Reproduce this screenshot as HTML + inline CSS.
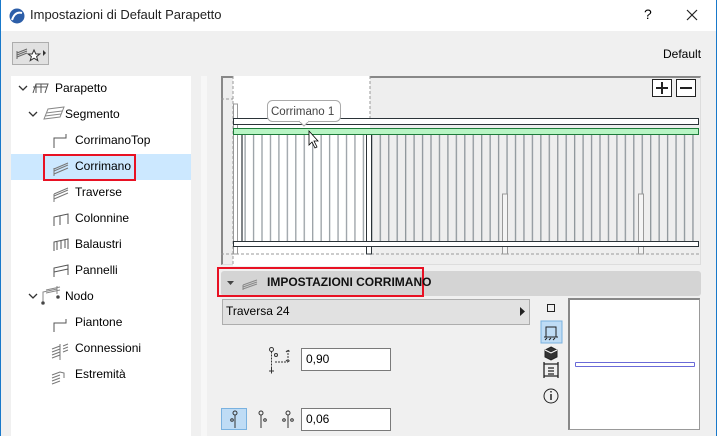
<!DOCTYPE html><html><head><meta charset="utf-8"><style>
*{margin:0;padding:0;box-sizing:border-box}
body{width:717px;height:436px;overflow:hidden;background:#f0f0f0;font-family:"Segoe UI","Liberation Sans",sans-serif;font-size:12px;color:#000;position:relative}
.a{position:absolute}
.t{position:absolute;font-size:12px;white-space:nowrap}
</style></head><body>
<div class="a" style="left:0;top:0;width:717px;height:436px;border-left:1px solid #1979ca;border-right:1px solid #1979ca"></div>
<div class="a" style="left:1px;top:0;width:715px;height:31px;background:#fff"></div>
<svg class="a" style="left:9px;top:8px" width="16" height="16"><circle cx="8" cy="8" r="7.5" fill="#2c5ea8"/><path d="M3 12 Q6 3 13 5" stroke="#fff" stroke-width="2" fill="none"/></svg>
<div class="t" style="left:30px;top:7px;font-size:13px;color:#222">Impostazioni di Default Parapetto</div>
<div class="t" style="left:644px;top:6px;font-size:14px">?</div>
<svg class="a" style="left:686px;top:9px" width="12" height="12"><path d="M1 1L11 11M11 1L1 11" stroke="#222" stroke-width="1.2"/></svg>
<div class="a" style="left:12px;top:42px;width:37px;height:23px;background:#e1e1e1;border:1px solid #adadad"></div>
<svg class="a" style="left:15px;top:45px" width="32" height="18"><path d="M2 8L12 4M2 10L12 6M2 12L12 8M2 6V14" stroke="#666" fill="none"/><path d="M19 5l1.8 4h4l-3.2 2.6 1.2 4-3.8-2.4-3.8 2.4 1.2-4-3.2-2.6h4z" fill="#fff" stroke="#333"/><path d="M28 5l3 3-3 3z" fill="#333"/></svg>
<div class="t" style="left:663px;top:47px">Default</div>
<div class="a" style="left:11px;top:76px;width:180px;height:360px;background:#fff"></div>
<div class="a" style="left:11px;top:154px;width:180px;height:26px;background:#cce8ff"></div>
<div class="a" style="left:43px;top:154px;width:93px;height:27px;border:2px solid #e81123"></div>
<div class="a" style="left:201px;top:76px;width:6px;height:360px;background:#f7f7f7"></div>
<svg class="a" style="left:0;top:76px" width="191" height="320" fill="none" stroke="#555">
<path d="M19 10l4 4 4-4M29 36l4 4 4-4M29 218l4 4 4-4" stroke="#333" stroke-width="1.3"/>
<path d="M33 17l3-9h12l-3 9M36 8v9M41 8v9M33 11h14" />
<path d="M44 43l4-10 16-2-4 10zM45 40l16-2M46 37l16-2" stroke="#888"/>
<path d="M54 72V62h12v-4" stroke="#555"/>
<path d="M54 98l14-6M54 95l14-6M54 93l14-6M54 100V92" stroke="#777"/>
<path d="M54 123l14-6M54 120l14-6M54 118l14-6M54 126V118" stroke="#777"/>
<path d="M54 150V141l14-3v10M60 140v9" />
<path d="M54 175V166l14-3v10M57 166v8M61 165v8M65 164v8" />
<path d="M54 201V192l14-3v10M54 196l14-3" />
<path d="M43 226V216l14-3M46 214l14-3M46 217l14-3M57 210v8" stroke="#888"/><circle cx="43" cy="227" r="1.3" fill="#333"/><circle cx="58" cy="221" r="1.3" fill="#333"/>
<path d="M54 256V247h12v-4"/>
<path d="M52 282l8-3M52 279l8-3M52 276l8-3M52 273l8-3M60 284v-16M63 270l5-2M63 273l5-2M63 276l5-2" stroke="#777"/>
<path d="M52 308l8-3M52 305l8-3M52 302l8-3M52 299l8-3l4 1v5" stroke="#777"/>
</svg>
<div class="t" style="left:55px;top:81px">Parapetto</div>
<div class="t" style="left:65px;top:107px">Segmento</div>
<div class="t" style="left:75px;top:133px">CorrimanoTop</div>
<div class="t" style="left:75px;top:159px">Corrimano</div>
<div class="t" style="left:75px;top:185px">Traverse</div>
<div class="t" style="left:75px;top:211px">Colonnine</div>
<div class="t" style="left:75px;top:237px">Balaustri</div>
<div class="t" style="left:75px;top:263px">Pannelli</div>
<div class="t" style="left:65px;top:289px">Nodo</div>
<div class="t" style="left:75px;top:315px">Piantone</div>
<div class="t" style="left:75px;top:341px">Connessioni</div>
<div class="t" style="left:75px;top:367px">Estremità</div>

<div class="a" style="left:221px;top:76px;width:480px;height:189px;background:#eee;border-top:2px solid #888;border-left:2px solid #888;border-right:1px solid #ddd;border-bottom:1px solid #ddd"></div>
<svg class="a" style="left:221px;top:76px" width="480" height="190">
<defs><pattern id="b1" x="12" y="0" width="8.45" height="200" patternUnits="userSpaceOnUse"><rect x="3" width="1.3" height="200" fill="#8e969b"/></pattern><pattern id="b2" x="12" y="0" width="8.45" height="200" patternUnits="userSpaceOnUse"><rect x="3" width="1.3" height="200" fill="#99a0a5"/></pattern></defs>
<rect x="12" y="0" width="137" height="190" fill="#fff"/>
<path d="M12 0v190M149 0v50M0 23h12M0 178h479" stroke="#999" stroke-dasharray="3,2"/>
<rect x="17" y="53" width="133" height="113" fill="url(#b2)"/>
<rect x="150" y="53" width="326" height="113" fill="url(#b1)"/>
<path d="M16 53v113M21 53v113" stroke="#2b3338" stroke-width="1.2"/>
<rect x="12.5" y="28" width="4" height="150" fill="#fff" stroke="#999"/>
<rect x="145.5" y="53" width="5" height="125" fill="#fff" stroke="#2b3338"/>
<rect x="281.5" y="118" width="5" height="60" fill="#f4f4f4" stroke="#999"/>
<rect x="417.5" y="118" width="5" height="60" fill="#f4f4f4" stroke="#999"/>
<rect x="12.5" y="42.5" width="465" height="6" fill="#fff" stroke="#2b3338"/>
<path d="M12 53h466" stroke="#2b3338"/>
<rect x="12.5" y="52.5" width="465" height="6" fill="#b8f5c4" stroke="#1e7a3a"/>
<rect x="12.5" y="165.5" width="465" height="5" fill="#fff" stroke="#2b3338"/>
<rect x="46.5" y="24.5" width="73" height="21" rx="5" fill="#fff" stroke="#aaa"/>
<path d="M78 45l5 5 5-5" fill="#fff" stroke="#aaa"/><path d="M79 45h8" stroke="#fff" stroke-width="2"/>
<text x="50" y="39" font-family="Liberation Sans" font-size="11.5" fill="#444">Corrimano 1</text>
<path d="M88 55v14l3-3 3 6 2-1-3-6h4z" fill="#fff" stroke="#000" stroke-width=".8"/>
<rect x="431.5" y="3.5" width="19" height="17" fill="#fff" stroke="#222"/><path d="M435 12h12M441 6v12" stroke="#222" stroke-width="2"/>
<rect x="455.5" y="3.5" width="19" height="17" fill="#fff" stroke="#222"/><path d="M459 12h12" stroke="#222" stroke-width="2"/>
</svg>

<div class="a" style="left:221px;top:271px;width:480px;height:25px;background:#d4d4d4;border-radius:3px"></div>
<div class="a" style="left:217px;top:267px;width:207px;height:30px;border:2px solid #e81123"></div>
<svg class="a" style="left:226px;top:278px" width="40" height="14"><path d="M1 3h7l-3.5 4z" fill="#444"/><path d="M17 11l14-5M17 9l14-5M17 7l14-5M17 12V7" stroke="#888" fill="none"/></svg>
<div class="t" style="left:267px;top:275px;font-weight:bold;color:#111">IMPOSTAZIONI CORRIMANO</div>
<div class="a" style="left:222px;top:299px;width:308px;height:26px;background:#e1e1e1;border:1px solid #adadad"></div>
<div class="t" style="left:226px;top:304px">Traversa 24</div>
<svg class="a" style="left:520px;top:307px" width="6" height="9"><path d="M0 0l5 4.5L0 9z" fill="#222"/></svg>
<svg class="a" style="left:540px;top:302px" width="24" height="110" fill="none" stroke="#222">
<rect x="7.5" y="2.5" width="7" height="7"/>
<rect x="1" y="19" width="21" height="22" fill="#bfdcf5" stroke="#7ab2e0"/>
<path d="M6 35V25h10v10M4 35h14M5 38l2-2M9 38l2-2M13 38l2-2" />
<path d="M11 45l6 3v7l-6 3-6-3v-7z" fill="#333"/><path d="M5 48l6 3 6-3" stroke="#fff"/>
<path d="M4 60v16M18 60v16M4 62h14M4 74h14M8 66h6M8 69h6M8 72h6" stroke-width="1.3"/>
<circle cx="11" cy="94" r="7"/><path d="M11 92v6M11 89v1.5" stroke-width="1.5"/>
</svg>
<div class="a" style="left:568px;top:298px;width:132px;height:132px;background:#fff;border:1px solid #999;border-top:2px solid #888;border-left:2px solid #888"></div>
<div class="a" style="left:575px;top:362px;width:120px;height:5px;border:1px solid #6a6ad8;border-radius:1px"></div>
<svg class="a" style="left:268px;top:346px" width="26" height="32" fill="none" stroke="#333"><circle cx="3.5" cy="3.5" r="2"/><path d="M3.5 5.5v18M7 16h13M20 4v12M18 6l2-2 2 2M18 14l2 2 2-2" stroke-dasharray="2,1"/><circle cx="8" cy="9" r="1.5"/><path d="M1 25h5M3.5 22.5v5"/></svg>
<div class="a" style="left:301px;top:348px;width:90px;height:23px;background:#fff;border:1px solid #7a7a7a"></div>
<div class="t" style="left:306px;top:352px">0,90</div>
<div class="a" style="left:221px;top:408px;width:26px;height:22px;background:#bfdcf5;border:1px solid #7ab2e0"></div>
<svg class="a" style="left:222px;top:409px" width="78" height="22" fill="none" stroke="#333"><circle cx="13" cy="4" r="2"/><path d="M13 6v13"/><circle cx="10" cy="11" r="1.3"/><circle cx="39" cy="4" r="2"/><path d="M39 6v13"/><circle cx="43" cy="11" r="1.3"/><circle cx="66" cy="4" r="2"/><path d="M66 6v13"/><circle cx="62" cy="11" r="1.3"/><circle cx="70" cy="11" r="1.3"/></svg>
<div class="a" style="left:301px;top:408px;width:90px;height:23px;background:#fff;border:1px solid #7a7a7a"></div>
<div class="t" style="left:306px;top:412px">0,06</div>
</body></html>
